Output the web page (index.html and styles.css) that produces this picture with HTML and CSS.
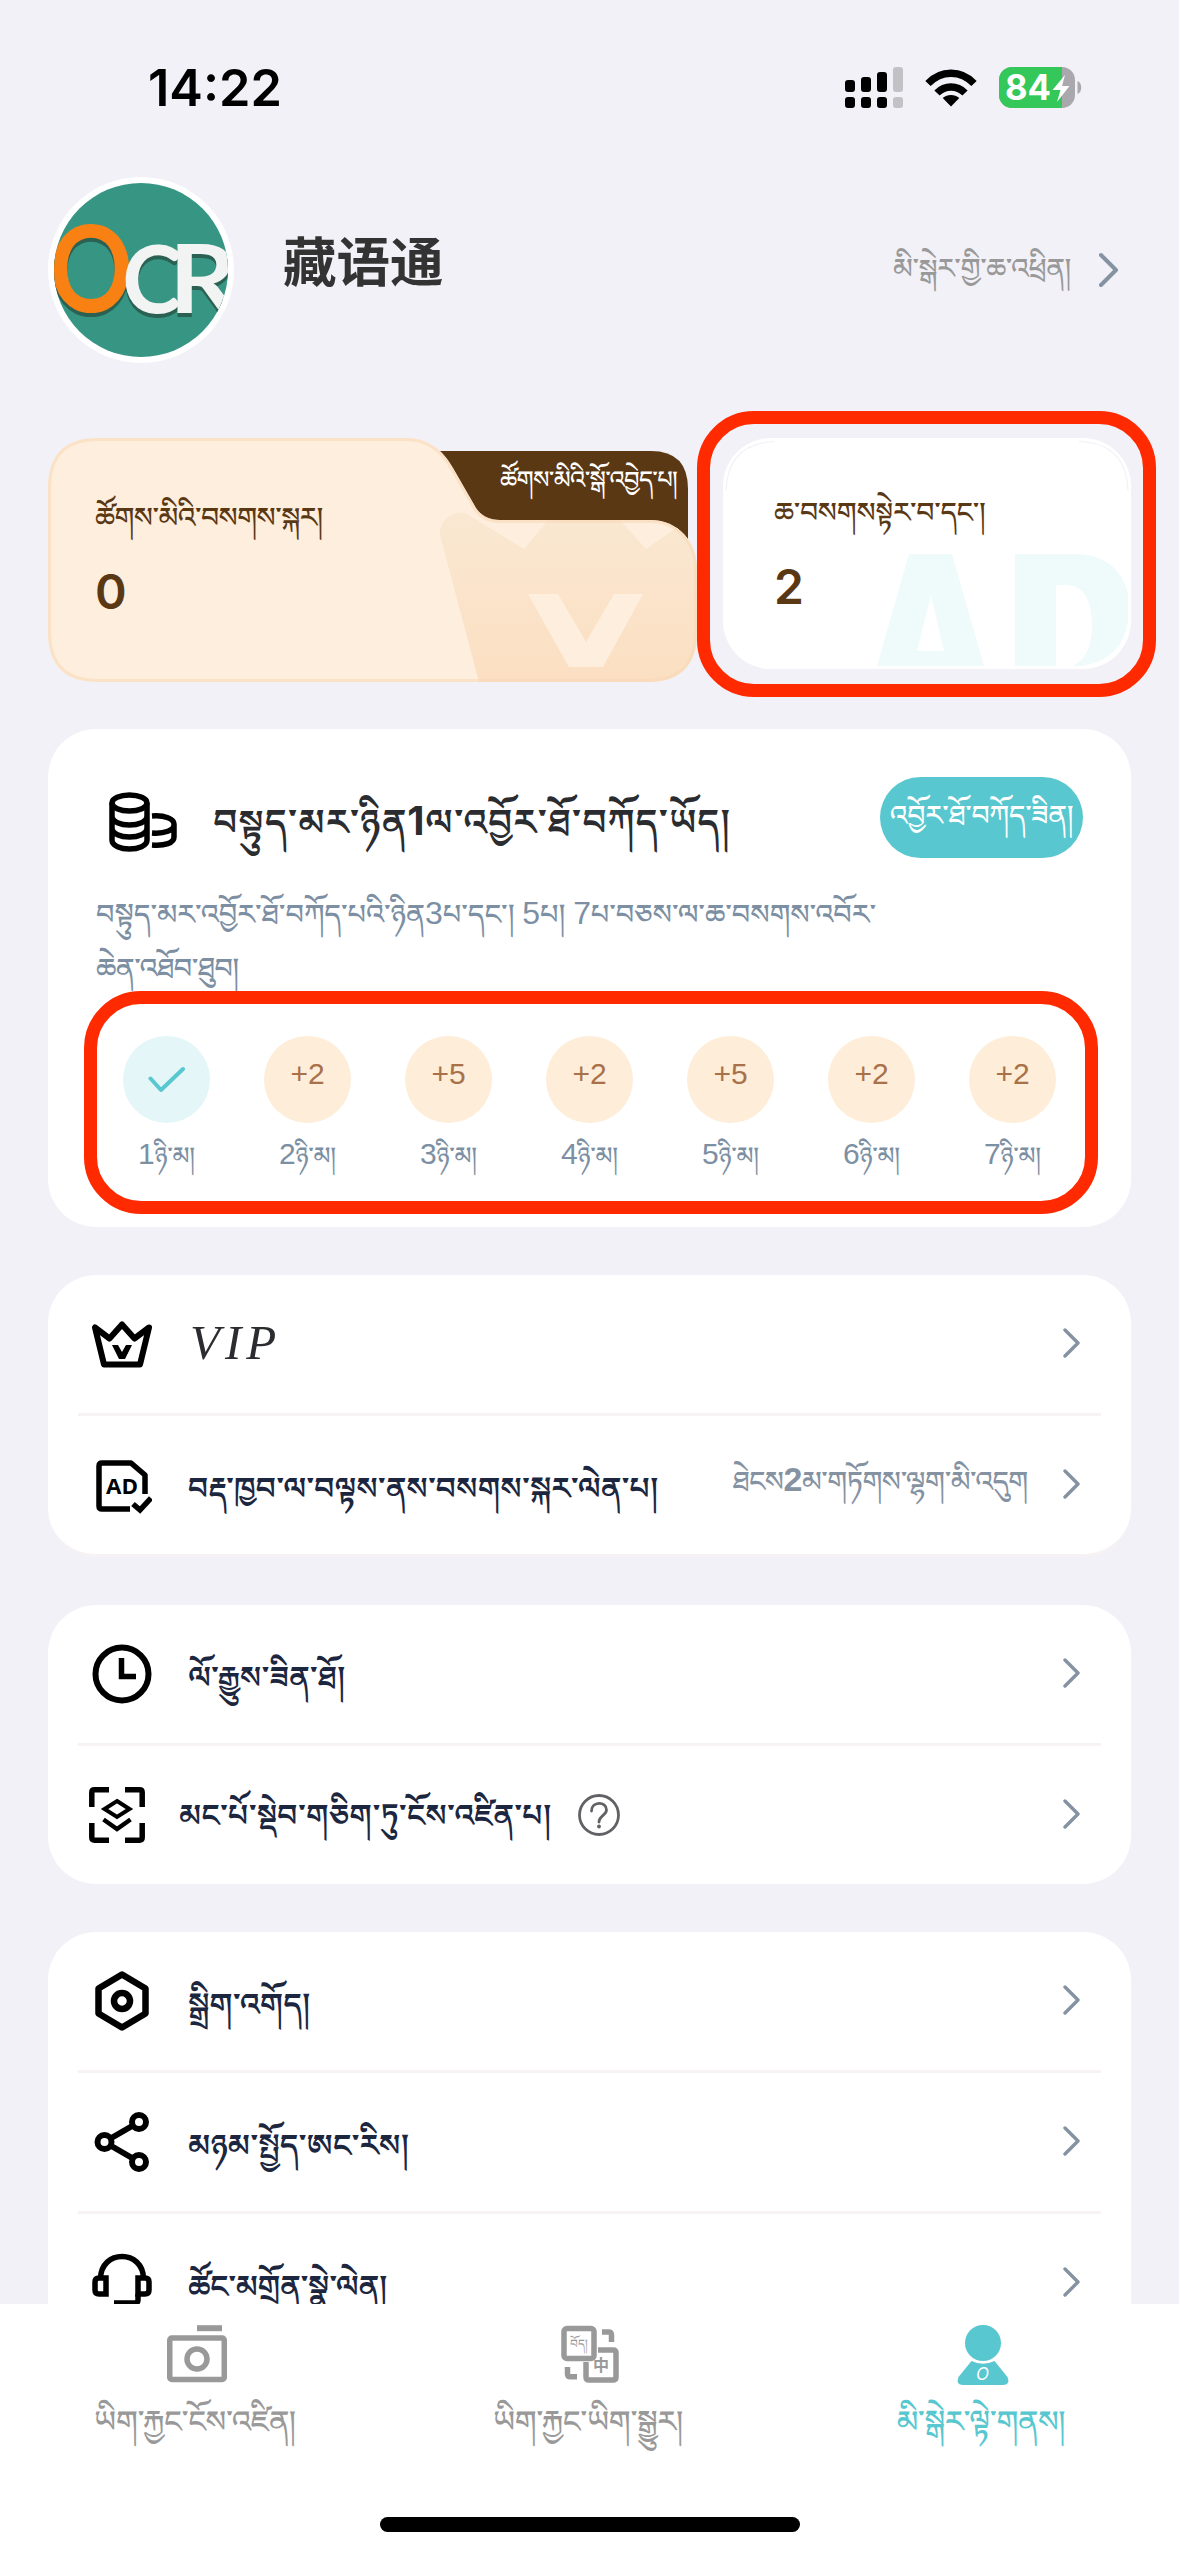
FILE: index.html
```
<!DOCTYPE html>
<html lang="bo">
<head>
<meta charset="utf-8">
<title>藏语通</title>
<link rel="stylesheet" href="styles.css">
</head>
<body>
<svg class="defs" width="0" height="0">
  <symbol id="chevron" viewBox="0 0 18 30"><path d="M2 2l13 13-13 13" fill="none" stroke="#8592a2" stroke-width="3.4" stroke-linecap="round" stroke-linejoin="round"/></symbol>
</svg>
<header class="status">
  <span class="time">14:22</span>
  <div class="status-icons">
    <svg width="58" height="41" viewBox="0 0 58 41">
      <g fill="#000"><rect x="0" y="13" width="10" height="12" rx="3"/><rect x="16" y="10" width="10" height="15" rx="3"/><rect x="32" y="5" width="10" height="20" rx="3"/><rect x="0" y="30" width="10" height="11" rx="3"/><rect x="16" y="30" width="10" height="11" rx="3"/><rect x="32" y="30" width="10" height="11" rx="3"/></g>
      <g fill="#c2c1c6"><rect x="48" y="0" width="10" height="25" rx="3"/><rect x="48" y="30" width="10" height="11" rx="3"/></g>
    </svg>
    <svg class="wifi" width="52" height="38" viewBox="0 0 52 38">
      <g fill="none" stroke="#000" stroke-width="7.4"><path d="M3 14.5C16 .8 36 .8 49 14.5"/><path d="M12 24C20 16 32 16 40 24"/></g>
      <path d="M26 37.5l-8.3-8.6c4.5-4 12-4 16.600 0z"/>
    </svg>
    <svg class="battery" width="84" height="41" viewBox="0 0 84 41">
      <defs><clipPath id="cell"><rect width="76" height="41" rx="13"/></clipPath></defs>
      <g clip-path="url(#cell)"><rect width="76" height="41" fill="#a9a8ad"/><rect width="63" height="41" fill="#34c759"/></g>
      <path d="M78.500 14c5 2 5 11 0 13z" fill="#a9a8ad"/>
      <text x="6" y="33" class="battery-text" textLength="46" lengthAdjust="spacingAndGlyphs">84</text>
      <path d="M66 8L53.500 23h8L58 35l12.500-16h-7.500z" fill="#fff"/>
    </svg>
  </div>
</header>

<main>
<section class="profile">
  <svg class="avatar" width="186" height="186" viewBox="0 0 186 186">
    <defs><clipPath id="disc"><circle cx="93" cy="93" r="87"/></clipPath></defs>
    <circle cx="93" cy="93" r="93" fill="#fff"/>
    <circle cx="93" cy="93" r="87" fill="#379683"/>
    <g clip-path="url(#disc)" class="logo">
      <g fill="#2a6153"><text x="1" y="139" font-size="120" textLength="84" lengthAdjust="spacingAndGlyphs">O</text><text x="74" y="140" font-size="94" textLength="60" lengthAdjust="spacingAndGlyphs" transform="rotate(2 105 110)">C</text><text x="121" y="140" font-size="96" textLength="68" lengthAdjust="spacingAndGlyphs">R</text></g>
      <text x="1" y="135" font-size="120" fill="#f98113" textLength="84" lengthAdjust="spacingAndGlyphs">O</text>
      <text x="74" y="136" font-size="94" fill="#f2f4f3" textLength="60" lengthAdjust="spacingAndGlyphs" transform="rotate(2 105 110)">C</text>
      <text x="121" y="136" font-size="96" fill="#f2f4f3" textLength="68" lengthAdjust="spacingAndGlyphs">R</text>
    </g>
  </svg>
  <h1 class="name">藏语通</h1>
  <span class="t profile-link">མི་སྒེར་གྱི་ཆ་འཕྲིན།</span>
  <svg class="profile-chevron" width="20" height="36" viewBox="0 0 20 36"><path d="M2 3l15 15L2 33" fill="none" stroke="#8592a2" stroke-width="4" stroke-linecap="round" stroke-linejoin="round"/></svg>
</section>

<section class="points">
  <div class="vip-card">
    <svg class="card-art" width="649" height="244" viewBox="0 0 649 244">
      <defs>
        <linearGradient id="crownFill" x1="0" y1="0" x2="0" y2="1"><stop offset="0" stop-color="#fae8d2"/><stop offset="1" stop-color="#fbdfc2"/></linearGradient>
        <clipPath id="folder"><path d="M50 0H358C380 0 395 12 405 30L428 70Q436 82 452 82H603C630 82 649 104 649 130V194Q649 244 599 244H50Q0 244 0 194V50Q0 0 50 0Z"/></clipPath>
      </defs>
      <path d="M380 13H603Q640 13 640 51V110H440Z" fill="#5a3814"/>
      <g clip-path="url(#folder)">
        <rect width="649" height="244" fill="#feeede"/>
        <path d="M431 244L392 97C391 78 412 69 424 79L476 111 500 82H572L598 111 649 76V244Z" fill="url(#crownFill)"/>
        <path d="M480 156H510L538 204 566 156H595L555 229H521Z" fill="#feeede"/>
        <path d="M50 0H358C380 0 395 12 405 30L428 70Q436 82 452 82H603C630 82 649 104 649 130V194Q649 244 599 244H50Q0 244 0 194V50Q0 0 50 0Z" fill="none" stroke="#f8d9b6" stroke-opacity=".6" stroke-width="6"/>
      </g>
    </svg>
    <span class="t tab-label">ཚོགས་མིའི་སྒོ་འབྱེད་པ།</span>
    <span class="t card-label">ཚོགས་མིའི་བསགས་སྐར།</span>
    <strong class="count">0</strong>
  </div>
  <div class="ad-card">
    <svg class="card-art" width="408" height="231" viewBox="0 0 408 231">
      <g fill="none" stroke="#f2f1f7" stroke-width="1.200"><path d="M3 52Q5 5 52 3.500"/><path d="M356 3.500Q403 5 405 52"/></g>
      <g fill="#effafb" fill-rule="evenodd"><path d="M186 116H229L261 228H154ZM208 157L194 213H221Z"/><path d="M292 116H355Q395 118 405 155V184Q399 222 358 228H292ZM333 147V228H350Q369 218 369 188 369 147 343 147Z"/></g>
    </svg>
    <span class="t card-label">ཆ་བསགསསྟེར་བ་དང་།</span>
    <strong class="count">2</strong>
    <div class="mark mark-ad"></div>
  </div>
</section>

<section class="card sign">
  <div class="sign-head">
    <svg class="coins" width="68" height="60" viewBox="0 0 68 60" fill="none" stroke="#000" stroke-width="5.500">
      <ellipse cx="20.500" cy="11" rx="17.500" ry="8"/>
      <path d="M3 11V48C3 60 38 60 38 48V11M3 24C3 36 38 36 38 24M3 36C3 48 38 48 38 36"/>
      <path d="M43 24C56 23 65 27 65 32V45C65 51 56 54 43 53M43 41C56 42 65 38 65 33"/>
    </svg>
    <h2 class="t sign-title">བསྟུད་མར་ཉིན<b>1</b>ལ་འབྱོར་ཐོ་བཀོད་ཡོད།</h2>
    <span class="sign-button"><span class="t">འབྱོར་ཐོ་བཀོད་ཟིན།</span></span>
  </div>
  <p class="desc"><span class="t">བསྟུད་མར་འབྱོར་ཐོ་བཀོད་པའི་ཉིན<i>3</i>པ་དང་། <i>5</i>པ། <i>7</i>པ་བཅས་ལ་ཆ་བསགས་འབོར་</span><br><span class="t desc-end">ཆེན་འཐོབ་ཐུབ།</span></p>
  <div class="days">
    <div class="day"><span class="dot done"><svg width="38" height="28" viewBox="0 0 38 28"><path d="M2.500 12.500L13 24 35 3" fill="none" stroke="#58c7cf" stroke-width="4" stroke-linecap="round" stroke-linejoin="round"/></svg></span><span class="t day-name"><i>1</i>ཉི་མ།</span></div>
    <div class="day"><span class="dot">+2</span><span class="t day-name"><i>2</i>ཉི་མ།</span></div>
    <div class="day"><span class="dot">+5</span><span class="t day-name"><i>3</i>ཉི་མ།</span></div>
    <div class="day"><span class="dot">+2</span><span class="t day-name"><i>4</i>ཉི་མ།</span></div>
    <div class="day"><span class="dot">+5</span><span class="t day-name"><i>5</i>ཉི་མ།</span></div>
    <div class="day"><span class="dot">+2</span><span class="t day-name"><i>6</i>ཉི་མ།</span></div>
    <div class="day"><span class="dot">+2</span><span class="t day-name"><i>7</i>ཉི་མ།</span></div>
  </div>
  <div class="mark mark-days"></div>
</section>

<section class="card menu menu-points">
  <div class="row">
    <svg class="icon" width="60" height="60" viewBox="0 0 60 60" fill="none" stroke="#000" stroke-width="6" stroke-linejoin="round"><path d="M3 13L12 50H48L57 13 42.500 24 30 10 17.500 24Z" transform="translate(0 .5)"/><path d="M20 31h6l4 7 4-7h6l-7 14h-6z" fill="#000" stroke="none"/></svg>
    <span class="label vip">VIP</span>
    <svg class="chev" width="18" height="30"><use href="#chevron"/></svg>
  </div>
  <div class="row">
    <svg class="icon" width="60" height="60" viewBox="0 0 60 60" fill="none" stroke="#000" stroke-width="5.500"><path d="M38 54H10Q7 54 7 51V11Q7 8 10 8H39L53 20V39" stroke-linejoin="round"/><path d="M41 49l7 6 11-12"/><text class="ad" x="14" y="39" textLength="32" lengthAdjust="spacingAndGlyphs">AD</text></svg>
    <span class="t label">བརྡ་ཁྱབ་ལ་བལྟས་ནས་བསགས་སྐར་ལེན་པ།</span>
    <span class="t hint">ཐེངས<b>2</b>མ་གཏོགས་ལྷག་མི་འདུག</span>
    <svg class="chev" width="18" height="30"><use href="#chevron"/></svg>
  </div>
</section>

<section class="card menu">
  <div class="row">
    <svg class="icon" width="60" height="60" viewBox="0 0 60 60" fill="none" stroke="#000" stroke-width="6"><circle cx="30" cy="30" r="26.500"/><path d="M29.500 14V32.500H44" stroke-width="5.500"/></svg>
    <span class="t label">ལོ་རྒྱུས་ཟིན་ཐོ།</span>
    <svg class="chev" width="18" height="30"><use href="#chevron"/></svg>
  </div>
  <div class="row scan-row">
    <svg class="icon" width="56" height="56" viewBox="0 0 56 56" fill="none" stroke="#000" stroke-width="5.500"><path d="M2.800 20V5.500Q2.800 2.800 5.500 2.800H20M36 2.800H50.500Q53.200 2.800 53.200 5.500V20M53.200 36V50.500Q53.200 53.200 50.500 53.200H36M20 53.200H5.500Q2.800 53.200 2.800 50.500V36"/><path d="M28 14L40.500 22 28 30 15.500 22Z" stroke-width="4"/><path d="M14.500 32.500L28 42 41.500 32.500" stroke-width="4.500"/></svg>
    <span class="t label">མང་པོ་སྡེབ་གཅིག་ཏུ་ངོས་འཛིན་པ།</span>
    <svg class="help" width="42" height="42" viewBox="0 0 42 42" fill="none" stroke="#626266" stroke-width="2.800"><circle cx="21" cy="21" r="19.500"/><path d="M13.500 17C13.500 7 28.500 7 28.500 16 28.500 21 21 22 21 28" stroke-linecap="round"/><circle cx="21" cy="32.500" r="1.900" fill="#626266" stroke="none"/></svg>
    <svg class="chev" width="18" height="30"><use href="#chevron"/></svg>
  </div>
</section>

<section class="card menu menu-more">
  <div class="row">
    <svg class="icon" width="60" height="60" viewBox="0 0 60 60" fill="none" stroke="#000" stroke-width="6.500" stroke-linejoin="round"><path d="M30 3.500L53.500 17.500V42.500L30 56.500 6.500 42.500V17.500Z"/><circle cx="30" cy="30" r="8"/></svg>
    <span class="t label">སྒྲིག་འགོད།</span>
    <svg class="chev" width="18" height="30"><use href="#chevron"/></svg>
  </div>
  <div class="row">
    <svg class="icon" width="60" height="60" viewBox="0 0 60 60" fill="none" stroke="#000" stroke-width="6"><circle cx="12.500" cy="30" r="7"/><circle cx="47" cy="10" r="7"/><circle cx="47" cy="50" r="7"/><path d="M18.500 26.500L41 13.500M18.500 33.500L41 46.500"/></svg>
    <span class="t label">མཉམ་སྤྱོད་ཨང་རིས།</span>
    <svg class="chev" width="18" height="30"><use href="#chevron"/></svg>
  </div>
  <div class="row">
    <svg class="icon" width="60" height="60" viewBox="0 0 60 60" fill="none" stroke="#000" stroke-width="5.500"><path d="M8.500 26C8.500 -4 51.500 -4 51.500 26"/><path d="M14 25H7Q3 25 3 29V37Q3 41 7 41H14ZM46 25H53Q57 25 57 29V37Q57 41 53 41H46Z"/><path d="M46 41V47Q46 50 43 50H22"/></svg>
    <span class="t label last-label">ཚོང་མགྲོན་སྣེ་ལེན།</span>
    <svg class="chev" width="18" height="30"><use href="#chevron"/></svg>
  </div>
</section>
</main>

<nav class="tabs">
  <div class="tab">
    <svg width="60" height="60" viewBox="0 0 60 60" fill="none" stroke="#999" stroke-width="5.500"><path d="M30 3.200H55" stroke-width="6"/><rect x="2.750" y="13" width="54.500" height="41.500" rx="2"/><circle cx="30" cy="34" r="10"/></svg>
    <span class="t tab-name">ཡིག་རྐྱང་ངོས་འཛིན།</span>
  </div>
  <div class="tab">
    <svg width="60" height="60" viewBox="0 0 60 60" fill="none" stroke="#999" stroke-width="5.500"><rect x="4" y="3.500" width="30" height="30" rx="3"/><path d="M38 25H53Q56 25 56 28V52Q56 55 53 55H29Q26 55 26 52V37"/><path d="M42 7H48.500Q51.500 7 51.500 10V17M7.500 42V49Q7.500 51.800 10.500 51.800H17"/><text class="glyph" x="10" y="23" font-size="12" textLength="18" lengthAdjust="spacingAndGlyphs">བོད།</text><text class="glyph" x="33" y="46" font-size="16" font-weight="700">中</text></svg>
    <span class="t tab-name">ཡིག་རྐྱང་ཡིག་སྒྱུར།</span>
  </div>
  <div class="tab active">
    <svg width="60" height="60" viewBox="0 0 60 60" fill="#58c7cf"><circle cx="30" cy="18" r="18"/><path d="M18.500 36Q30 41.500 41.500 36L54.500 52Q57.500 60 50 60H10Q2.500 60 5.500 52Z"/><text x="23" y="54.500" fill="#fff" font-family="Inter" font-style="italic" font-size="17">O</text></svg>
    <span class="t tab-name">མི་སྒེར་ལྟེ་གནས།</span>
  </div>
  <div class="home-bar"></div>
</nav>
</body>
</html>
```
FILE: styles.css
```
* { box-sizing: border-box; margin: 0; }
body {
  width: 1179px;
  height: 2556px;
  display: flex;
  flex-direction: column;
  overflow: hidden;
  position: relative;
  background: #f2f1f7;
  font-family: "Liberation Sans", "Noto Serif Tibetan", "Noto Sans CJK SC", sans-serif;
}
svg { display: block; flex: none; }
.defs { position: absolute; }
.t { white-space: nowrap; font-weight: 500; }
.t i { font-style: normal; font-weight: 400; }

.status { height: 177px; flex: none; display: flex; justify-content: space-between; align-items: flex-start; padding: 67px 96px 0 148px; }
.time { font: 600 50.500px/41px Inter, sans-serif; }
.status-icons { display: flex; gap: 22px; }
.wifi { margin-top: 2px; }
.battery-text { font: 700 36px Inter, sans-serif; fill: #fff; }

main { flex: 1; min-height: 0; overflow: hidden; padding: 0 48px; }
.profile { display: flex; align-items: center; height: 186px; padding-right: 12px; }
.logo { font-family: Lato, sans-serif; font-weight: 700; }
.name { margin: -23px auto 0 49px; font: 700 53.500px/60px "Noto Sans CJK SC", sans-serif; color: #333; }
.profile-link { margin: -3px 28px 0 0; font-size: 28px; line-height: 40px; letter-spacing: -0.500px; color: #999; }

.points { display: flex; gap: 26px; height: 244px; margin-top: 75px; }
.vip-card, .ad-card { position: relative; display: flex; flex-direction: column; }
.vip-card { width: 649px; padding: 60px 47px 0; }
.ad-card { width: 408px; height: 231px; padding: 55px 51px 0; background: #fff; border-radius: 48px; }
.card-art { position: absolute; left: 0; top: 0; }
.tab-label { position: absolute; left: 452px; top: 22px; font-size: 24px; line-height: 40px; letter-spacing: -0.750px; color: #fff; }
.card-label { position: relative; font-size: 28px; line-height: 40px; letter-spacing: -0.650px; color: #5a3814; }
.ad-card .card-label { letter-spacing: -0.350px; }
.count { position: relative; margin-top: 34px; font: 600 48px/40px Inter, sans-serif; color: #5a3814; }

.mark { position: absolute; border: 13px solid #ff2a00; border-radius: 57px; }
.mark-ad { left: -26px; top: -27px; width: 459px; height: 286px; }
.mark-days { left: 36px; top: 262px; width: 1014px; height: 223px; }

.card { position: relative; background: #fff; border-radius: 48px; }
.sign { height: 498px; margin-top: 47px; padding: 48px; }
.sign-head { display: flex; align-items: center; height: 81px; padding-left: 13px; }
.coins { margin-top: 9px; }
.sign-title { margin: 9px auto 0 36px; font-size: 37px; line-height: 50px; font-weight: 600; letter-spacing: 0.800px; color: #2b2c2f; }
.sign-title b { font: 700 40px Inter, sans-serif; }
.sign-button { width: 203px; height: 81px; border-radius: 41px; background: #58c7cf; color: #fff; display: flex; justify-content: center; font-size: 28px; line-height: 77px; letter-spacing: -0.400px; }
.desc { margin-top: 28px; font-size: 28.500px; line-height: 54px; color: #7c8fa3; letter-spacing: -0.130px; }
.desc i { font-size: 32px; }
.desc-end { letter-spacing: -0.700px; }
.days { display: flex; justify-content: space-between; margin: 41px 0 0; padding: 0 27px; }
.day { width: 87px; display: flex; flex-direction: column; align-items: center; }
.dot { width: 87px; height: 87px; border-radius: 50%; background: #feedd8; color: #a8714a; font-size: 30px; line-height: 76px; text-align: center; }
.done { background: #e4f6f8; display: flex; align-items: center; justify-content: center; }
.day-name { font-size: 24px; line-height: 40px; margin-top: 11px; letter-spacing: -0.300px; color: #7c8fa3; }
.day-name i { font-size: 30px; }

.menu { margin-top: 48px; padding: 0 30px; }
.menu-points { border-bottom: 3px solid #f7f2f3; }
.row { display: flex; align-items: center; height: 138px; padding: 0 20px 0 14px; }
.row + .row { height: 141px; border-top: 3px solid #f7f2f3; }
.label { margin: 7px 0 0 36px; font-size: 31px; line-height: 40px; letter-spacing: -0.150px; font-weight: 600; color: #1c273f; }
.menu-more .label { font-size: 31.400px; }
.vip { margin: -2px 0 0 38px; font: italic 400 49px/40px "Liberation Serif", serif; letter-spacing: 5px; color: #2b2c2f; }
.menu-more .last-label { font-size: 31px; letter-spacing: -0.500px; }
.ad { font: 700 21px "Open Sans", sans-serif; fill: #000; stroke: none; }
.chev { margin: -3px 0 0 auto; }
.hint { margin: -9px 0 0 auto; font-size: 28px; line-height: 40px; letter-spacing: -0.600px; color: #8592a2; }
.hint b { font-size: 34px; }
.hint + .chev { margin-left: 35px; }
.scan-row { padding-left: 11px; }
.scan-row .label { margin: 2px 0 0 34px; letter-spacing: 0; }
.help { margin-left: 27px; }

.tabs { position: relative; flex: none; height: 252px; background: #fff; display: flex; padding-top: 21px; }
.tab { width: 393px; display: flex; flex-direction: column; align-items: center; color: #999; }
.tab-name { margin: 14px 3px 0 0; font-size: 30.400px; line-height: 44px; letter-spacing: -0.450px; }
.glyph { font-family: "Noto Sans CJK SC", sans-serif; fill: #999; stroke: none; }
.active { color: #58c7cf; }
.home-bar { position: absolute; left: 380px; bottom: 24px; width: 420px; height: 15px; border-radius: 8px; background: #000; }
```
